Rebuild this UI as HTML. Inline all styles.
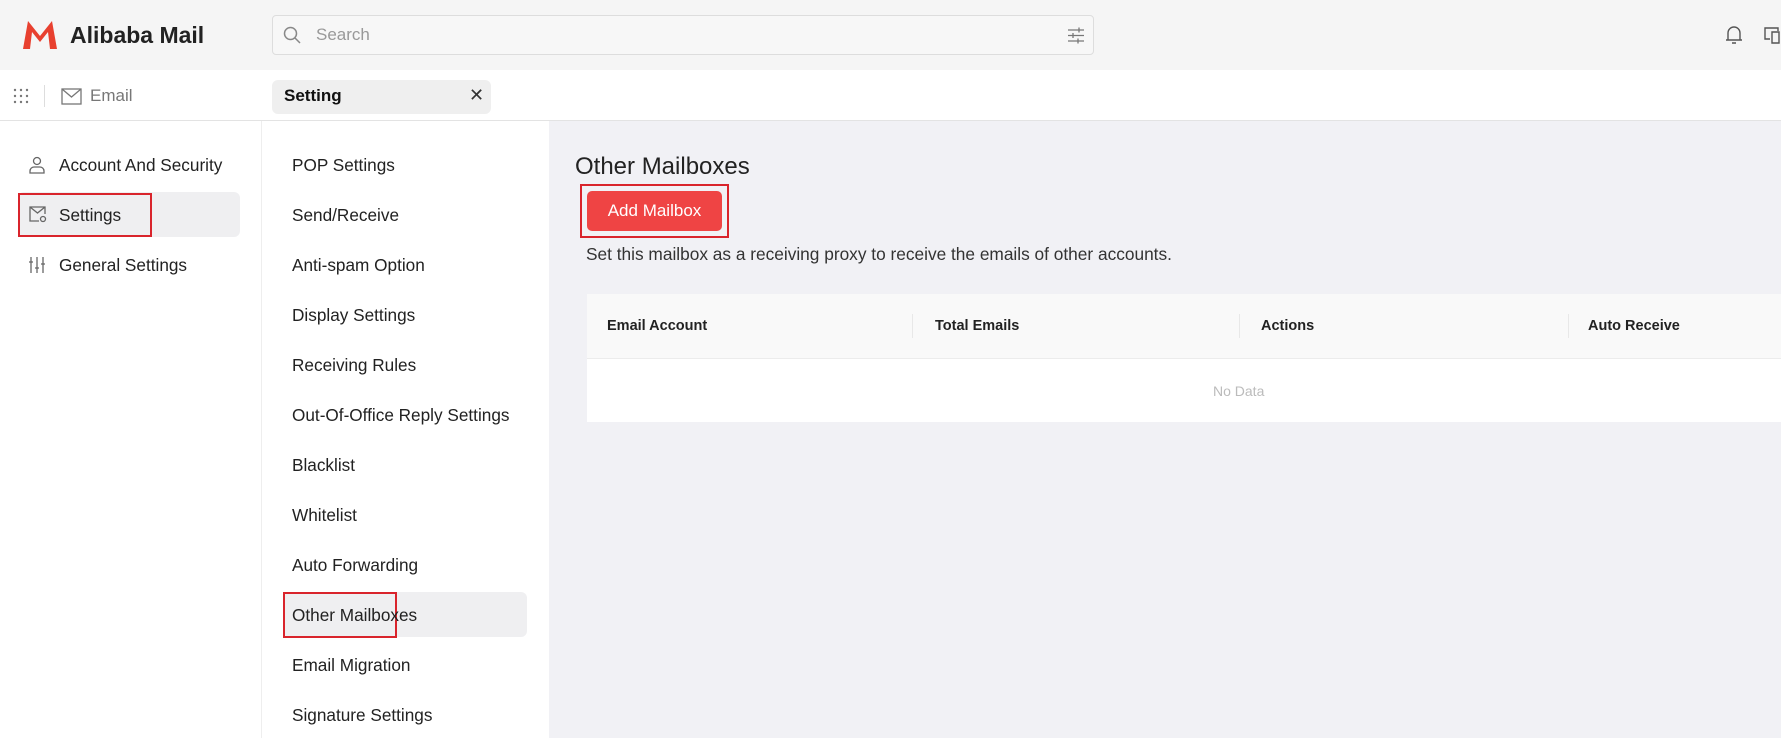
<!DOCTYPE html>
<html><head><meta charset="utf-8"><style>
*{box-sizing:border-box;margin:0;padding:0}
body{width:1781px;height:738px;overflow:hidden;font-family:"Liberation Sans",Arial,sans-serif;background:#fff;position:relative;color:#222}
.a{position:absolute}
.hdr{left:0;top:0;width:1781px;height:70px;background:#f5f5f5}
.row2{left:0;top:70px;width:1781px;height:51px;background:#fff;border-bottom:1px solid #e3e3e3}
.mi{font-size:17.2px;color:#222;white-space:nowrap}
.th{font-size:14.5px;font-weight:bold;color:#222}
</style></head><body>
<div class="a hdr"></div>
<svg class="a" style="left:23px;top:21px" width="34" height="28" viewBox="0 0 34 28"><path d="M0 28 L5 0 L17 15 L29 0 L34 28 L27 28 L25 11 L17 21 L9 11 L7 28Z" fill="#e8402f"/></svg>
<div class="a" style="left:70px;top:22px;font-size:23px;font-weight:bold;color:#222">Alibaba Mail</div>
<div class="a" style="left:272px;top:15px;width:822px;height:40px;border:1px solid #ddd;border-radius:4px;background:#f7f7f7"></div>
<svg class="a" style="left:283px;top:26px" width="18" height="18" viewBox="0 0 18 18"><circle cx="7.5" cy="7.5" r="6" fill="none" stroke="#888" stroke-width="1.5"/><path d="M12 12l5 5" stroke="#888" stroke-width="1.5"/></svg>
<div class="a" style="left:316px;top:25px;font-size:17px;color:#999">Search</div>
<svg class="a" style="left:1067px;top:27px" width="18" height="17" viewBox="0 0 18 17" stroke="#777" stroke-width="1.3"><path d="M1 3h16M1 8.5h16M1 14h16M12 0.5v5M6 6v5M11 11.5v5"/></svg>
<svg class="a" style="left:1725px;top:25px" width="18" height="20" viewBox="0 0 18 20" fill="none" stroke="#555" stroke-width="1.4"><path d="M3 15V8a6 6 0 0112 0v7M1 15h16M7 18h4"/></svg>
<svg class="a" style="left:1763px;top:26px" width="18" height="18" viewBox="0 0 18 18" fill="none" stroke="#555" stroke-width="1.4"><path d="M15 5V2H2v11h5M9 6h7v11H9z"/></svg>

<div class="a row2"></div>
<svg class="a" style="left:13px;top:88px" width="16" height="16" viewBox="0 0 16 16" fill="#777"><circle cx="2" cy="2" r="1.2"/><circle cx="8" cy="2" r="1.2"/><circle cx="14" cy="2" r="1.2"/><circle cx="2" cy="8" r="1.2"/><circle cx="8" cy="8" r="1.2"/><circle cx="14" cy="8" r="1.2"/><circle cx="2" cy="14" r="1.2"/><circle cx="8" cy="14" r="1.2"/><circle cx="14" cy="14" r="1.2"/></svg>
<div class="a" style="left:44px;top:85px;width:1px;height:22px;background:#ddd"></div>
<svg class="a" style="left:61px;top:88px" width="21" height="17" viewBox="0 0 21 17" fill="none" stroke="#777" stroke-width="1.3"><rect x="1" y="1" width="19" height="15"/><path d="M1 1l9.5 8L20 1"/></svg>
<div class="a" style="left:90px;top:86px;font-size:17px;color:#777">Email</div>
<div class="a" style="left:272px;top:80px;width:219px;height:34px;background:#efefef;border-radius:6px"></div>
<div class="a" style="left:284px;top:86px;font-size:17px;font-weight:bold;color:#111">Setting</div>
<div class="a" style="left:469px;top:85px;font-size:18px;color:#333">✕</div>

<div class="a" style="left:261px;top:121px;width:1px;height:617px;background:#eee"></div>
<div class="a" style="left:549px;top:121px;width:1232px;height:617px;background:#f1f1f5"></div>

<div class="a" style="left:18px;top:192px;width:222px;height:45px;background:#efeff1;border-radius:6px"></div>
<div class="a" style="left:18px;top:193px;width:134px;height:44px;border:2px solid #d9242c"></div>
<svg class="a" style="left:29px;top:156px" width="16" height="18" viewBox="0 0 16 18" fill="none" stroke="#666" stroke-width="1.3"><circle cx="8" cy="5" r="3.5"/><path d="M1 17v-2a4 4 0 014-4h6a4 4 0 014 4v2z"/></svg>
<div class="a mi" style="left:59px;top:155px">Account And Security</div>
<svg class="a" style="left:29px;top:206px" width="18" height="17" viewBox="0 0 18 17" fill="none" stroke="#666" stroke-width="1.3"><path d="M10 15H1V1h15v7M1 1l7.5 6L16 1"/><circle cx="14" cy="13" r="2.5"/></svg>
<div class="a mi" style="left:59px;top:205px">Settings</div>
<svg class="a" style="left:29px;top:256px" width="17" height="18" viewBox="0 0 17 18" fill="none" stroke="#666" stroke-width="1.3"><path d="M2 1v16M8 1v16M14 1v16M0 6h4M6 12h4M12 8h4"/></svg>
<div class="a mi" style="left:59px;top:255px">General Settings</div>

<div class="a" style="left:283px;top:592px;width:244px;height:45px;background:#efeff1;border-radius:6px"></div>
<div class="a" style="left:283px;top:592px;width:114px;height:46px;border:2px solid #d9242c"></div>
<div class="a mi" style="left:292px;top:155px">POP Settings</div>
<div class="a mi" style="left:292px;top:205px">Send/Receive</div>
<div class="a mi" style="left:292px;top:255px">Anti-spam Option</div>
<div class="a mi" style="left:292px;top:305px">Display Settings</div>
<div class="a mi" style="left:292px;top:355px">Receiving Rules</div>
<div class="a mi" style="left:292px;top:405px">Out-Of-Office Reply Settings</div>
<div class="a mi" style="left:292px;top:455px">Blacklist</div>
<div class="a mi" style="left:292px;top:505px">Whitelist</div>
<div class="a mi" style="left:292px;top:555px">Auto Forwarding</div>
<div class="a mi" style="left:292px;top:605px">Other Mailboxes</div>
<div class="a mi" style="left:292px;top:655px">Email Migration</div>
<div class="a mi" style="left:292px;top:705px">Signature Settings</div>

<div class="a" style="left:575px;top:153px;font-size:24px;color:#222">Other Mailboxes</div>
<div class="a" style="left:580px;top:184px;width:149px;height:54px;border:2px solid #d9242c"></div>
<div class="a" style="left:587px;top:191px;width:135px;height:40px;background:#ef4444;border-radius:5px;color:#fff;font-size:17px;text-align:center;line-height:40px">Add Mailbox</div>
<div class="a" style="left:586px;top:244px;font-size:17.3px;color:#333">Set this mailbox as a receiving proxy to receive the emails of other accounts.</div>

<div class="a" style="left:587px;top:294px;width:1194px;height:65px;background:#f9f9f9;border-bottom:1px solid #ececec"></div>
<div class="a" style="left:587px;top:359px;width:1194px;height:63px;background:#fff"></div>
<div class="a" style="left:912px;top:314px;width:1px;height:24px;background:#e8e8e8"></div>
<div class="a" style="left:1239px;top:314px;width:1px;height:24px;background:#e8e8e8"></div>
<div class="a" style="left:1568px;top:314px;width:1px;height:24px;background:#e8e8e8"></div>
<div class="a th" style="left:607px;top:318px">Email Account</div>
<div class="a th" style="left:935px;top:318px">Total Emails</div>
<div class="a th" style="left:1261px;top:318px">Actions</div>
<div class="a th" style="left:1588px;top:318px">Auto Receive</div>
<div class="a" style="left:1213px;top:383px;font-size:14px;color:#bbb">No Data</div>
</body></html>
